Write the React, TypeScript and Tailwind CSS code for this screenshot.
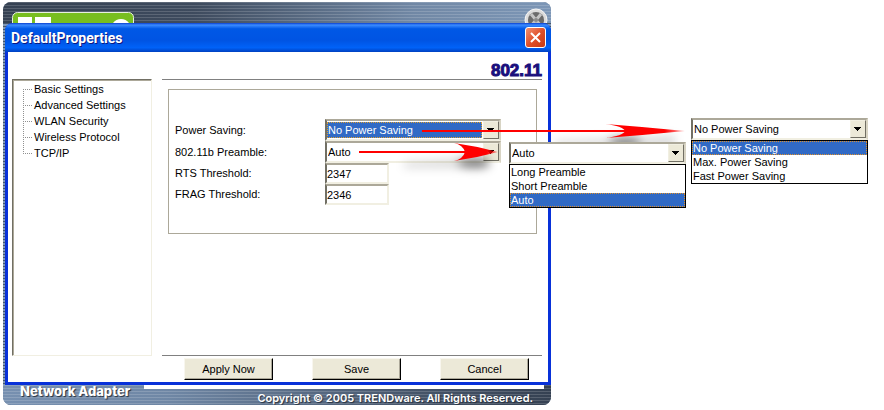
import React, { useState } from "react";

const TREE_ITEMS = ["Basic Settings", "Advanced Settings", "WLAN Security", "Wireless Protocol", "TCP/IP"];
const POWER_OPTIONS = ["No Power Saving", "Max. Power Saving", "Fast Power Saving"];
const PREAMBLE_OPTIONS = ["Long Preamble", "Short Preamble", "Auto"];

type DropDownProps = {
  id?: string;
  label?: string;
  value: string;
  options: string[];
  focused?: boolean;
  onChange: (value: string) => void;
};

function DropDown({ id, label, value, options, focused = false, onChange }: DropDownProps) {
  return (
    <div className="flex h-[22px] w-full border-2 border-t-[#aca899] border-l-[#716f64] border-r-[#d8d4c4] border-b-[#f1efe2] bg-white">
      <select
        id={id}
        aria-label={label}
        value={value}
        onChange={(e) => onChange(e.target.value)}
        className={
          focused
            ? "my-px mr-px min-w-0 flex-1 appearance-none border border-dotted border-[#e0a030] bg-[#316ac5] text-[11px] leading-[14px] text-white outline-none"
            : "my-px mr-px min-w-0 flex-1 appearance-none border border-transparent bg-white text-[11px] leading-[14px] text-black outline-none"
        }
      >
        {options.map((option) => (
          <option key={option}>{option}</option>
        ))}
      </select>
      <span className="pointer-events-none flex w-4 items-center justify-center border border-t-[#f1efe2] border-l-[#f1efe2] border-r-[#716f64] border-b-[#716f64] bg-[#ece9d8]">
        <svg width="8" height="4" viewBox="0 0 8 4" shapeRendering="crispEdges">
          <path d="M0 0h7v1H6v1H5v1H4v1H3V3H2V2H1V1H0z" />
        </svg>
      </span>
    </div>
  );
}

type OptionListProps = {
  options: string[];
  value: string;
  label: string;
  onSelect: (value: string) => void;
};

function OptionList({ options, value, label, onSelect }: OptionListProps) {
  return (
    <ul role="listbox" aria-label={label} className="border border-black bg-white text-[11px] leading-[12px]">
      {options.map((option) => (
        <li
          key={option}
          role="option"
          aria-selected={option === value}
          onClick={() => onSelect(option)}
          className={
            option === value
              ? "border border-dotted border-[#e0902a] bg-[#316ac5] text-white"
              : "border border-transparent text-black"
          }
        >
          {option}
        </li>
      ))}
    </ul>
  );
}

function PushButton({ children }: { children: React.ReactNode }) {
  return (
    <button
      type="button"
      className="h-[22px] w-[89px] border border-t-[#f8f6ee] border-l-[#f8f6ee] border-r-black border-b-black bg-[#ece9d8] text-[11px] leading-4 shadow-[inset_-1px_-1px_0_#aca899]"
    >
      {children}
    </button>
  );
}

type ArrowProps = {
  id: string;
  length: number;
  head: number;
  spread: number;
  className: string;
};

// Red pointer with a soft shadow under its head
function Arrow({ id, length, head, spread, className }: ArrowProps) {
  const back = length - head;
  const notch = back + head * 0.25;
  const mid = back + head * 0.5;
  return (
    <svg width={length} height="50" viewBox={`0 0 ${length} 50`} className={className} aria-hidden="true">
      <defs>
        <filter id={`${id}-blur`} x="-30%" y="-100%" width="160%" height="300%">
          <feGaussianBlur stdDeviation="5" />
        </filter>
        <linearGradient id={`${id}-tip`}>
          <stop offset="0.75" stopColor="#ff0000" />
          <stop offset="1" stopColor="#ff0000" stopOpacity="0.3" />
        </linearGradient>
      </defs>
      <g filter={`url(#${id}-blur)`}>
        <path d={`M${back - 50} 20L${length - 10} 14V26H${back - 50}z`} opacity="0.14" />
        <ellipse cx={back + 20} cy="21" rx="16" ry="5" opacity="0.45" />
      </g>
      <path d={`M0 9H${mid}v2H0z`} fill="#ff0000" />
      <path
        d={`M${back} ${10 - spread}Q${mid} ${13 - spread} ${length} 10Q${mid} ${7 + spread} ${back} ${10 + spread}Q${notch - 2} ${8 + spread} ${notch} 10Q${notch - 2} ${12 - spread} ${back} ${10 - spread}z`}
        fill={`url(#${id}-tip)`}
      />
    </svg>
  );
}

export default function App() {
  const [power, setPower] = useState("No Power Saving");
  const [preamble, setPreamble] = useState("Auto");
  const [rts, setRts] = useState("2347");
  const [frag, setFrag] = useState("2346");

  const inputClass =
    "h-[21px] w-16 border-2 border-t-[#aca899] border-l-[#716f64] border-r-[#f1efe2] border-b-[#f1efe2] bg-white text-[11px] outline-none";

  return (
    <div className="relative bg-white px-[3px] pt-[2px] pb-1 font-['Liberation_Sans',Arial,sans-serif] text-[11px] text-black">
      {/* Utility window behind the dialog */}
      <main className="w-full max-w-[548px] overflow-hidden rounded-lg bg-[repeating-linear-gradient(to_bottom,#45566c_0px,#45566c_1px,#8299b6_1px,#8299b6_3px)]">
        <div className="flex h-[21px] items-end justify-between bg-[repeating-linear-gradient(to_bottom,rgba(255,255,255,0.16)_0px,rgba(255,255,255,0.16)_1px,transparent_1px,transparent_3px),linear-gradient(to_right,#354152_0%,#3e4b5e_35%,#7188a5_75%,#7c96b6_100%)] pr-[3px] pl-[9px]">
          <svg width="122" height="11" viewBox="0 0 122 11" aria-hidden="true">
            <rect x="0.5" y="0.5" width="121" height="24" rx="5" fill="#78be20" stroke="#e8f0e0" />
            <path d="M6 5h14v6H6zM23 5h16v6H23z" fill="#fff" />
            <path d="M101 11q3-4 8-4t8 4z" fill="#fff" />
          </svg>
          <svg width="24" height="15" viewBox="0 0 24 15" aria-hidden="true">
            <circle cx="12" cy="12" r="11" fill="#dcdcdc" stroke="#f4f4f4" />
            <circle cx="12" cy="12" r="8" fill="#6b6b6b" />
            <path d="M7 6l10 12M17 6l-10 12" stroke="#c4c4c4" strokeWidth="3" />
            <circle cx="12" cy="12" r="2" fill="#8a8a8a" />
          </svg>
        </div>

        {/* Properties dialog */}
        <section className="ml-[2px] rounded-t-lg bg-[#0831d9] px-[3px] pb-[3px]">
          <header className="-mx-[3px] flex h-[29px] items-center justify-between rounded-t-lg bg-[linear-gradient(to_bottom,#0a3fd0_0%,#3c8cff_7%,#0058e6_20%,#0054e3_60%,#0062f8_85%,#0040c0_100%)] pr-[5px] pl-[6px]">
            <h1 className="font-['Roboto',sans-serif] text-[14px] leading-4 font-bold text-white [text-shadow:1px_1px_0_#0a1883]">
              DefaultProperties
            </h1>
            <button
              type="button"
              aria-label="Close"
              className="flex size-[21px] items-center justify-center rounded-[3px] border border-white bg-linear-to-br from-[#f09070] via-[#e0502a] to-[#c83810]"
            >
              <svg width="11" height="11" viewBox="0 0 11 11">
                <path d="M1 1l9 9M10 1l-9 9" stroke="#fff" strokeWidth="2" />
              </svg>
            </button>
          </header>

          <div className="flex gap-[10px] bg-white pt-[27px] pr-[6px] pb-[2px] pl-1">
            <nav className="mb-6 w-[140px] shrink-0 border border-t-[#716f64] border-l-[#716f64] border-r-[#f1efe2] border-b-[#f1efe2] shadow-[inset_1px_1px_0_#aca899]">
              <ul className="pt-px pl-[10px]">
                {TREE_ITEMS.map((item, i) => (
                  <li key={item} className="flex h-4 items-center">
                    <svg width="10" height="16" viewBox="0 0 10 16" aria-hidden="true">
                      <path
                        d={i === 0 ? "M0.5 8v8M0 8.5h10" : i === TREE_ITEMS.length - 1 ? "M0.5 0v9M0 8.5h10" : "M0.5 0v16M0 8.5h10"}
                        fill="none"
                        stroke="#909090"
                        strokeDasharray="1 1"
                      />
                    </svg>
                    <a href="#" className="pl-px leading-4">
                      {item}
                    </a>
                  </li>
                ))}
              </ul>
            </nav>

            <div className="-mt-[18px] flex min-w-0 flex-1 flex-col">
              <h2 className="h-[18px] text-right text-[17px] leading-[20px] font-bold text-[#1a0f7c] [-webkit-text-stroke:1px_#1a0f7c]">
                802.11
              </h2>
              <div className="h-[277px] border-y border-[#808080] pt-[9px] pr-[5px] pl-[6px]">
                <form className="h-[145px] border border-[#aca899] pt-[29px] pl-[6px]" onSubmit={(e) => e.preventDefault()}>
                  <div className="grid grid-cols-[150px_minmax(0,176px)] items-center">
                    <label htmlFor="power">Power Saving:</label>
                    <DropDown id="power" value={power} options={POWER_OPTIONS} focused onChange={setPower} />
                    <label htmlFor="preamble">802.11b Preamble:</label>
                    <DropDown id="preamble" value={preamble} options={PREAMBLE_OPTIONS} onChange={setPreamble} />
                    <label htmlFor="rts">RTS Threshold:</label>
                    <input id="rts" className={inputClass} value={rts} onChange={(e) => setRts(e.target.value)} />
                    <label htmlFor="frag">FRAG Threshold:</label>
                    <input id="frag" className={inputClass} value={frag} onChange={(e) => setFrag(e.target.value)} />
                  </div>
                </form>
              </div>
              <div className="flex justify-between pt-[2px] pr-[13px] pl-[22px]">
                <PushButton>Apply Now</PushButton>
                <PushButton>Save</PushButton>
                <PushButton>Cancel</PushButton>
              </div>
            </div>
          </div>
        </section>

        <footer className="flex h-5 bg-[repeating-linear-gradient(to_bottom,rgba(255,255,255,0.16)_0px,rgba(255,255,255,0.16)_1px,transparent_1px,transparent_3px),linear-gradient(to_right,#7790b0_0%,#6f87a5_30%,#46556a_75%,#354152_100%)] pr-[7px] font-['Inter',sans-serif] text-white [text-shadow:1px_1px_1px_#26303e]">
          <span className="w-[141px] shrink-0 pl-[17px] text-[13px] leading-3 font-extrabold">Network Adapter</span>
          <div className="flex-1 border-t-4 border-white pr-[11px] text-right">
            <small className="block text-[11px] leading-[18px] font-semibold">
              Copyright © 2005 TRENDware. All Rights Reserved.
            </small>
          </div>
        </footer>
      </main>

      {/* Opened drop-downs and the pointers leading to them */}
      <Arrow id="preamble-arrow" length={139} head={44} spread={9} className="absolute top-[142px] left-[359px]" />
      <Arrow id="power-arrow" length={263} head={80} spread={7} className="absolute top-[121px] left-[422px]" />
      <div className="absolute top-[142px] left-[509px] w-[177px]">
        <DropDown label="802.11b Preamble choices" value={preamble} options={PREAMBLE_OPTIONS} onChange={setPreamble} />
        <OptionList label="802.11b Preamble list" options={PREAMBLE_OPTIONS} value={preamble} onSelect={setPreamble} />
      </div>
      <div className="absolute top-[118px] left-[691px] w-[177px]">
        <DropDown label="Power Saving choices" value={power} options={POWER_OPTIONS} onChange={setPower} />
        <OptionList label="Power Saving list" options={POWER_OPTIONS} value={power} onSelect={setPower} />
      </div>
    </div>
  );
}
